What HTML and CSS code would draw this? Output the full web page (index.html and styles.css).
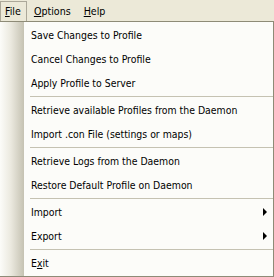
FILE: index.html
```html
<!DOCTYPE html>
<html lang="en">
<head>
    <meta charset="UTF-8">
    <title>File menu</title>
    <link rel="stylesheet" href="styles.css">
</head>
<body>
    <div id="menubar">
        <div class="top-item open"><u>F</u>ile</div>
        <div class="top-item"><u>O</u>ptions</div>
        <div class="top-item"><u>H</u>elp</div>
    </div>
    <div id="file-menu">
        <div class="menu-item"><span>Save Changes to Profile</span></div>
        <div class="menu-item"><span>Cancel Changes to Profile</span></div>
        <div class="menu-item"><span>Apply Profile to Server</span></div>
        <div class="separator"></div>
        <div class="menu-item"><span>Retrieve available Profiles from the Daemon</span></div>
        <div class="menu-item"><span>Import .con File (settings or maps)</span></div>
        <div class="separator"></div>
        <div class="menu-item"><span>Retrieve Logs from the Daemon</span></div>
        <div class="menu-item"><span>Restore Default Profile on Daemon</span></div>
        <div class="separator"></div>
        <div class="menu-item"><span>Import</span><span class="arrow"></span></div>
        <div class="menu-item"><span>Export</span><span class="arrow"></span></div>
        <div class="separator"></div>
        <div class="menu-item"><span>E<u>x</u>it</span></div>
    </div>
</body>
</html>
```

FILE: styles.css
```css
body {
    margin: 0;
    padding: 0;
    background-color: #ece9d8;
    font-family: Tahoma, "DejaVu Sans Condensed", "DejaVu Sans", sans-serif;
    font-size: 10.4px;
    color: #000;
    overflow: hidden;
}
#menubar {
    display: flex;
    height: 21px;
    background-color: #ece9d8;
    font-size: 10.6px;
}
.top-item {
    margin-top: 1px;
    padding: 0 5px 0 4px;
    line-height: 19px;
    border: 1px solid transparent;
    border-bottom: none;
}
.top-item.open {
    border-color: #aca899;
}
.top-item + .top-item {
    padding-left: 6px;
}
#file-menu {
    border: 1px solid #8e8b77;
    border-left: none;
    padding: 1px 0;
    background-color: #fcfcf9;
    background-image: linear-gradient(to right, #fcfcf9, #ebe9df 45%, #c5c2b2);
    background-size: 24px 100%;
    background-repeat: no-repeat;
}
.menu-item {
    display: flex;
    align-items: center;
    justify-content: space-between;
    height: 24px;
    padding: 0 6px 0 31px;
}
.arrow {
    width: 0;
    height: 0;
    border-left: 4px solid #000;
    border-top: 4px solid transparent;
    border-bottom: 4px solid transparent;
}
.separator {
    height: 1px;
    margin: 1px 0 1px 30px;
    background-color: #c5c2b2;
}
```
